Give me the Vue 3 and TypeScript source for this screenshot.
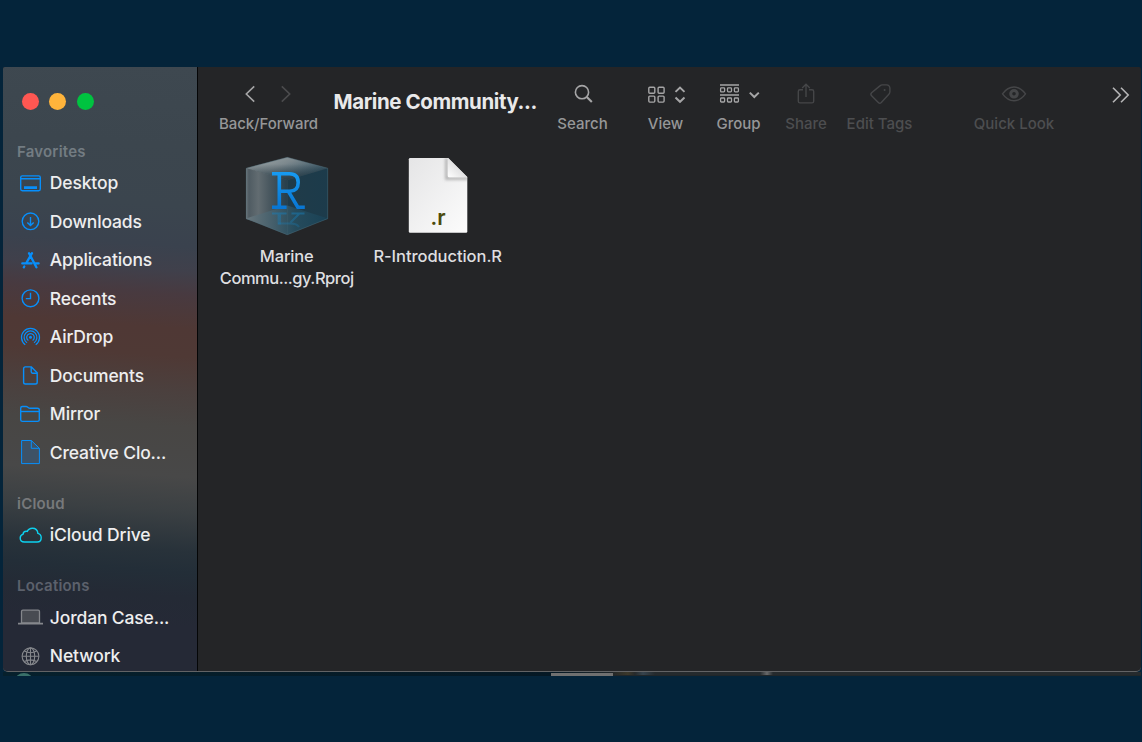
<script setup lang="ts">
interface Place {
  name: string
  icon: string
}
interface Section {
  title: string
  items: Place[]
}
const sections: Section[] = [
  {
    title: 'Favorites',
    items: [
      { name: 'Desktop', icon: 'screenbar' },
      { name: 'Downloads', icon: 'downloads' },
      { name: 'Applications', icon: 'apps' },
      { name: 'Recents', icon: 'recents' },
      { name: 'AirDrop', icon: 'airdrop' },
      { name: 'Documents', icon: 'doc' },
      { name: 'Mirror', icon: 'folder' },
      { name: 'Creative Clo...', icon: 'cloudfile' },
    ],
  },
  { title: 'iCloud', items: [{ name: 'iCloud Drive', icon: 'cloud' }] },
  {
    title: 'Locations',
    items: [
      { name: 'Jordan Case...', icon: 'laptop' },
      { name: 'Network', icon: 'globe' },
    ],
  },
]
</script>

<template>
  <div class="backdrop">
    <div class="window">
      <aside class="sidebar">
        <div class="lights"><i class="red" /><i class="yellow" /><i class="green" /></div>
        <section v-for="s in sections" :key="s.title" :class="'sec-' + s.title.toLowerCase()">
          <h2>{{ s.title }}</h2>
          <div v-for="p in s.items" :key="p.name" class="place">
            <svg class="ico" :class="'ico-' + p.icon" width="28" height="28" viewBox="0 0 28 28" fill="none">
              <template v-if="p.icon === 'screenbar'">
                <rect x="4.7" y="6.9" width="19.6" height="14.8" rx="1.6" />
                <path d="M4.7 9.7h19.6" />
                <path d="M8 18.6h13" stroke-width="2.6" />
              </template>
              <template v-else-if="p.icon === 'downloads'">
                <circle cx="14.5" cy="14.3" r="8.3" />
                <path d="M14.5 10v8.3M11.3 15.4l3.2 3.2 3.2-3.2" />
              </template>
              <g v-else-if="p.icon === 'apps'" stroke-width="2.3" stroke-linecap="round">
                <path d="M16 7.2L10.1 17.3M13 7.2L20.4 21.3M6.3 17.4h9.3M19.6 17.4h3" />
                <path d="M8.3 20.5l-.5.8" />
              </g>
              <template v-else-if="p.icon === 'recents'">
                <circle cx="14.5" cy="14.3" r="8.4" />
                <path d="M14.5 8.8v5.8H9.8" />
              </template>
              <g v-else-if="p.icon === 'airdrop'" stroke-width="1.25">
                <circle cx="14.5" cy="14.3" r="1.5" class="solid" />
                <path d="M12.4 17.5a3.8 3.8 0 1 1 4.2 0" />
                <path d="M11 19.7a6.4 6.4 0 1 1 7 0" />
                <path d="M9.3 21.7a9 9 0 1 1 10.4 0" />
              </g>
              <template v-else-if="p.icon === 'doc'">
                <path d="M9.4 5.9h6l5.8 5.9v9.4q0 1.8-1.8 1.8h-10q-1.8 0-1.8-1.8V7.7q0-1.8 1.8-1.8z" />
                <path d="M15.2 6v4.8q0 1.4 1.4 1.4h4.5" />
              </template>
              <template v-else-if="p.icon === 'folder'">
                <path d="M4.7 19.7V8.2q0-1.7 1.7-1.7h3.7q.8 0 1.4.5l1 .8q.5.4 1.2.4h7.8q1.8 0 1.8 1.8v9.7q0 1.7-1.8 1.7h-15q-1.8 0-1.8-1.7z" />
                <path d="M4.7 11.5h18.6" />
              </template>
              <template v-else-if="p.icon === 'cloudfile'">
                <path d="M5.6 2.5h9.7l8.1 7.8v15.3H5.6z" class="tint" stroke-width="1" />
                <path d="M15.3 2.5v7.8h8.1" stroke-width="1" />
              </template>
              <path
                v-else-if="p.icon === 'cloud'"
                d="M8.4 21q-4.2 0-4.2-4 0-2.7 2.9-3.8.1-3 3.2-3 .5 0 1 .2 1.4-3.2 5.1-3.2 5 0 5.5 5.2 3.3.8 3.3 4.3 0 4.3-4 4.3z"
              />
              <g v-else-if="p.icon === 'laptop'" stroke-width="1.3">
                <path d="M5.5 19.8V8.6q0-1.4 1.4-1.4h15.2q1.4 0 1.4 1.4v11.2z" class="screen" />
                <path d="M2 20.6h25" stroke-width="1.7" />
              </g>
              <g v-else stroke-width="1.1">
                <circle cx="14.5" cy="14.3" r="8.4" />
                <ellipse cx="14.5" cy="14.3" rx="4.2" ry="8.4" />
                <path d="M6.1 14.3h16.8M14.5 6v16.8M8.3 9q6.2 3.4 12.4 0M8.3 19.6q6.2-3.4 12.4 0" />
              </g>
            </svg>
            <span>{{ p.name }}</span>
          </div>
        </section>
      </aside>

      <main>
        <header class="toolbar">
          <div class="tool nav">
            <svg width="60" height="26" viewBox="0 0 60 26" fill="none" stroke-width="1.6">
              <path d="M15.2 5.4L7.3 13l7.9 7.6" stroke="#a5a5a6" />
              <path d="M42.8 5.4l7.9 7.6-7.9 7.6" stroke="#4b4b4d" />
            </svg>
            <span>Back/Forward</span>
          </div>
          <h1>Marine Community...</h1>
          <div class="tool search">
            <svg width="26" height="26" viewBox="0 0 26 26" fill="none" stroke="#a5a5a6">
              <circle cx="12" cy="11.2" r="6.6" stroke-width="1.6" />
              <path d="M16.8 16l5 5" stroke-width="2.1" />
            </svg>
            <span>Search</span>
          </div>
          <div class="tool view">
            <svg width="40" height="26" viewBox="0 0 40 26" fill="none" stroke="#a5a5a6" stroke-width="1.4">
              <rect x="2.8" y="6.2" width="6" height="6" rx="1" />
              <rect x="12.1" y="6.2" width="6" height="6" rx="1" />
              <rect x="2.8" y="15.1" width="6" height="6" rx="1" />
              <rect x="12.1" y="15.1" width="6" height="6" rx="1" />
              <path d="M29.5 10.9l4.5-4.3 4.5 4.3M29.5 16.5l4.5 4.3 4.5-4.3" stroke-width="2" />
            </svg>
            <span>View</span>
          </div>
          <div class="tool group">
            <svg width="42" height="26" viewBox="0 0 42 26" fill="none" stroke="#a5a5a6" stroke-width="1.3">
              <path d="M2 3.9h19M2 14h19" stroke-width="1.5" />
              <rect x="2.6" y="6.9" width="4" height="4" rx=".8" />
              <rect x="9.5" y="6.9" width="4" height="4" rx=".8" />
              <rect x="16.4" y="6.9" width="4" height="4" rx=".8" />
              <rect x="2.6" y="17" width="4" height="4" rx=".8" />
              <rect x="9.5" y="17" width="4" height="4" rx=".8" />
              <rect x="16.4" y="17" width="4" height="4" rx=".8" />
              <path d="M31.8 11.6l4.5 4.4 4.5-4.4" stroke-width="2" />
            </svg>
            <span>Group</span>
          </div>
          <div class="tool off share">
            <svg width="26" height="26" viewBox="0 0 26 26" fill="none" stroke="#454648" stroke-width="1.4">
              <path d="M10 8.7H7q-1.7 0-1.7 1.7v9.8q0 1.7 1.7 1.7h12q1.7 0 1.7-1.7v-9.8q0-1.7-1.7-1.7h-3" />
              <path d="M13 16V3.8M9.2 7L13 3.3 16.8 7" />
            </svg>
            <span>Share</span>
          </div>
          <div class="tool off tags">
            <svg width="26" height="26" viewBox="0 0 26 26" fill="none" stroke="#454648" stroke-width="1.4">
              <path d="M12.9 4.9q1-1 2.4-1h4.2q3.3.2 3.4 3.4v3.5q0 1.4-1 2.4l-7.6 8.2q-1.5 1.5-3 0l-6.7-6.6q-1.5-1.5 0-3z" />
              <circle cx="17.6" cy="9.1" r="1" fill="#454648" stroke="none" />
            </svg>
            <span>Edit Tags</span>
          </div>
          <div class="tool off look">
            <svg width="30" height="26" viewBox="0 0 30 26" fill="none" stroke="#454648">
              <path d="M3.5 12.8Q8.5 6 15 6t11.5 6.8q-5 6.9-11.5 6.9T3.5 12.8z" stroke-width="1.4" />
              <circle cx="15" cy="12.8" r="3.3" stroke-width="3" />
            </svg>
            <span>Quick Look</span>
          </div>
          <svg class="more" width="18" height="18" viewBox="0 0 18 18" fill="none" stroke="#b4b4b5" stroke-width="1.6">
            <path d="M1 1.7L8.2 9 1 16.3M9 1.7L16.2 9 9 16.3" />
          </svg>
        </header>

        <div class="files">
          <figure class="file">
            <svg width="90" height="84" viewBox="0 0 90 84">
              <defs>
                <linearGradient id="left" x1="0" x2="1" y1="0" y2="0">
                  <stop offset="0" stop-color="#6c757a" />
                  <stop offset=".07" stop-color="#4f5b62" />
                  <stop offset=".3" stop-color="#626c71" />
                  <stop offset=".6" stop-color="#46555d" />
                  <stop offset="1" stop-color="#263e4b" />
                </linearGradient>
                <linearGradient id="right" x1="0" x2="1" y1="0" y2="0">
                  <stop offset="0" stop-color="#203b49" />
                  <stop offset="1" stop-color="#1c3b4b" />
                </linearGradient>
                <linearGradient id="top" x1="0" x2="1" y1=".1" y2=".8">
                  <stop offset="0" stop-color="#a0a8aa" />
                  <stop offset=".4" stop-color="#7d898e" />
                  <stop offset="1" stop-color="#1b4053" />
                </linearGradient>
                <linearGradient id="topshade" x1="0" x2="0" y1="0" y2="1">
                  <stop offset=".3" stop-color="#22323b" stop-opacity="0" />
                  <stop offset="1" stop-color="#22323b" stop-opacity=".75" />
                </linearGradient>
                <linearGradient id="floor" x1="0" x2="1" y1="0" y2="0">
                  <stop offset="0" stop-color="#6a777d" />
                  <stop offset=".6" stop-color="#264b5c" />
                  <stop offset="1" stop-color="#194155" />
                </linearGradient>
                <linearGradient id="letter" gradientUnits="userSpaceOnUse" x1="0" x2="0" y1="18" y2="55">
                  <stop offset="0" stop-color="#179bf2" />
                  <stop offset="1" stop-color="#0875d2" />
                </linearGradient>
                <linearGradient id="mirror" gradientUnits="userSpaceOnUse" x1="0" x2="0" y1="58" y2="73">
                  <stop offset="0" stop-color="#1680bd" stop-opacity=".5" />
                  <stop offset="1" stop-color="#1680bd" stop-opacity=".25" />
                </linearGradient>
              </defs>
              <path d="M4 14.2L45.3 25v53L4 65z" fill="url(#left)" />
              <path d="M45.3 25L86 14.2V65L45.3 78z" fill="url(#right)" />
              <path d="M4 64.5L45.3 51.5 86 64.5 45.3 81z" fill="url(#floor)" />
              <path d="M4 14.2L45.3 3.2 86 14.2 45.3 26z" fill="url(#top)" />
              <path d="M4 14.2L45.3 3.2 86 14.2 45.3 26z" fill="url(#topshade)" />
              <path d="M4.3 14.2v50.4L45.3 80.7 85.7 64.6V14.2L45.3 3.3z" fill="none" stroke="#52707c" stroke-opacity=".5" stroke-width=".8" />
              <path d="M45.3 26v54" stroke="#4a6b79" stroke-opacity=".35" stroke-width=".8" />
              <g fill="none">
                <path d="M30 19.8h17.5q8.7 0 8.7 8.7t-8.7 8.8H37.3M37.3 20v33.2M30 53.2h14.6M46.4 37.3l9.4 15.9h7" stroke="url(#letter)" stroke-width="3.6" />
                <path d="M30 59.5h14.6M49.5 59.5h13M57 60l-8.5 8.5M36 69.5h12q7 .2 9 3.5" stroke="url(#mirror)" stroke-width="2" />
                <path d="M37.3 60.5v10" stroke="url(#mirror)" stroke-width="3.4" />
              </g>
            </svg>
            <figcaption><span>Marine</span><span class="tight">Commu...gy.Rproj</span></figcaption>
          </figure>
          <figure class="file">
            <svg width="90" height="84" viewBox="0 0 90 84">
              <defs>
                <linearGradient id="paper" x1="0" x2="1" y1="0" y2="1">
                  <stop offset="0" stop-color="#e5e5e6" />
                  <stop offset="1" stop-color="#fcfcfc" />
                </linearGradient>
                <linearGradient id="fold" x1="0" x2="1" y1="1" y2="0">
                  <stop offset="0" stop-color="#fff" />
                  <stop offset=".5" stop-color="#e2e2e3" />
                </linearGradient>
                <filter id="soft" x="-40%" y="-40%" width="180%" height="180%"><feGaussianBlur stdDeviation="1.6" /></filter>
                <clipPath id="sheet"><path d="M17.8 3.8H55L74 23.3v55.2H17.8q-1.3 0-1.3-1.3V5.1q0-1.3 1.3-1.3z" /></clipPath>
              </defs>
              <path d="M17.3 3.9h38L74.3 23v54.5q0 1.3-1.3 1.3H17.1q-1.3 0-1.3-1.3V5.3q0-1.4 1.5-1.4z" fill="url(#paper)" />
              <path d="M53.5 4v20.5H75" fill="none" stroke="#777" stroke-opacity=".5" stroke-width="3" filter="url(#soft)" clip-path="url(#sheet)" />
              <path d="M54.8 3.9l19.5 19.4H56.1q-1.3 0-1.3-1.3z" fill="url(#fold)" />
              <text x="37.5" y="70.8" class="ext">.r</text>
            </svg>
            <figcaption><span class="snug">R-Introduction.R</span></figcaption>
          </figure>
        </div>
      </main>
    </div>
    <div class="behind"><i class="orb" /><i class="tab" /><i class="strip" /></div>
  </div>
</template>

<style>
html,
body {
  margin: 0;
  background: #04243a;
}
</style>

<style scoped>
.backdrop {
  box-sizing: border-box;
  width: 1142px;
  height: 742px;
  padding: 67px 1px 0 3px;
  background: #04243a;
  overflow: hidden;
  font-family: Inter, 'Liberation Sans', sans-serif;
}
.window {
  display: flex;
  height: 604px;
  border-bottom: 1px solid #626365;
  border-radius: 2px 2px 5px 5px;
  overflow: hidden;
  background: #242527;
}
.sidebar {
  flex: none;
  box-sizing: border-box;
  width: 195px;
  height: 604px;
  overflow: hidden;
  border-right: 1px solid #050607;
  background: linear-gradient(184deg, #3e4850 0, #3c464e 80px, #3b454e 140px, #3a424e 180px, #40404b 205px, #483a40 228px, #4f3835 262px, #4f3935 290px, #4b403e 325px, #484644 360px, #484848 410px, #3b4043 445px, #28323a 484px, #232e38 505px, #242a35 530px, #252936 560px, #252936 610px);
}
.lights {
  display: flex;
  gap: 10.5px;
  padding: 26px 0 0 18.8px;
  height: 26.25px;
}
.lights i {
  width: 17px;
  height: 17px;
  border-radius: 50%;
}
.red { background: #ff5752; }
.yellow { background: #ffb43b; }
.green { background: #00c340; }
h2 {
  margin: 0;
  box-sizing: border-box;
  height: 44px;
  padding: 22.3px 0 0 14px;
  font-size: 15px;
  line-height: 20px;
  font-weight: 600;
  letter-spacing: 0.2px;
  color: #737c82;
}
.sec-icloud h2 { color: #77797b; }
.sec-locations h2 { color: #5c616c; }
.place {
  display: flex;
  align-items: center;
  height: 38.5px;
  padding-left: 13px;
  font-size: 17.5px;
  font-weight: 500;
  letter-spacing: -0.14px;
  color: #eeeeef;
  white-space: nowrap;
}
.place span { margin-left: 5.8px; }
.ico {
  flex: none;
  stroke: #078ffb;
  stroke-width: 1.4;
}
.ico-cloud { stroke: #0dd1ef; }
.ico-laptop,
.ico-globe { stroke: #85878c; }
.solid { fill: #078ffb; stroke: none; }
.tint { fill: #3e5266; }
.screen { fill: #484b52; }
main { flex: 1; min-width: 0; }
.toolbar {
  display: grid;
  grid-template-columns: 109px 11px 208px 81px 85px 61px 74px 73px 196px 18px;
  padding-left: 16px;
  height: 78px;
}
.nav { grid-column: 1; letter-spacing: -0.07px; }
h1 {
  grid-column: 3;
  margin: 22px 0 0 -0.5px;
  font-size: 20.5px;
  line-height: 26px;
  font-weight: 700;
  letter-spacing: -0.41px;
  color: #e9e9ea;
  white-space: nowrap;
}
.tool {
  display: flex;
  flex-direction: column;
  align-items: center;
  padding-top: 14px;
  font-size: 15px;
  line-height: 20px;
  font-weight: 500;
  color: #969798;
  white-space: nowrap;
}
.tool svg { flex: none; }
.tool span { margin-top: 6.5px; }
.off { color: #4d4e50; }
.more { margin-top: 19px; }
.files {
  display: flex;
  gap: 16px;
  padding: 9px 0 0 21.5px;
}
.file {
  width: 135px;
  margin: 0;
  display: flex;
  flex-direction: column;
  align-items: center;
}
.file svg { flex: none; }
figcaption {
  display: flex;
  flex-direction: column;
  align-items: center;
  margin: 6.5px 0 0 -0.6px;
  font-size: 16.5px;
  line-height: 22px;
  font-weight: 500;
  letter-spacing: -0.15px;
  color: #dfdfe0;
  white-space: nowrap;
}
.tight { letter-spacing: -0.48px; }
.snug { letter-spacing: -0.05px; }
.ext {
  font: 600 21px Inter, 'Liberation Sans', sans-serif;
  fill: #4c4a0c;
}
.behind {
  display: flex;
  height: 4px;
  background: linear-gradient(90deg, #06202c, #051824 550px, #202629 610px, #202729);
  overflow: hidden;
}
.orb {
  width: 18px;
  height: 16px;
  margin: 1px 0 0 12px;
  border-radius: 50%;
  background: #397069;
}
.tab {
  width: 62px;
  height: 4px;
  margin: 1px 0 0 518px;
  background: #707070;
}
.strip {
  flex: 1;
  height: 3px;
  background: linear-gradient(90deg, #242829, #3c382a 15px, #25292b 22px, #36434d 30px, #252a2d 42px, #252a2d 147px, #68696a 154px, #252a2d 160px);
}
</style>
